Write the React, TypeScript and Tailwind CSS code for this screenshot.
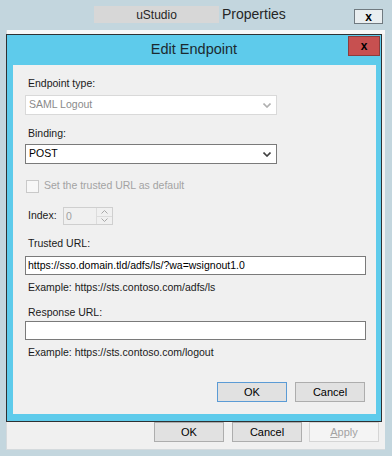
const Chevron = ({ color }: { color: string }) => (
  <svg width="8" height="5" viewBox="0 0 8 5" className="block">
    <polyline points="0.5,0.5 4,4 7.5,0.5" fill="none" stroke={color} strokeWidth="1.6" />
  </svg>
);

const SpinArrow = ({ up }: { up?: boolean }) => (
  <svg width="7" height="4" viewBox="0 0 7 4" className="block">
    <polyline
      points={up ? "0.5,3.5 3.5,0.5 6.5,3.5" : "0.5,0.5 3.5,3.5 6.5,0.5"}
      fill="none"
      stroke="#a8a8a8"
      strokeWidth="1"
    />
  </svg>
);

const Label = ({ children, className = "" }: { children: string; className?: string }) => (
  <div className={`pl-[3px] h-[14px] leading-[14px] text-[#1a1a1a] ${className}`}>{children}</div>
);

export default function App() {
  return (
    <div
      className="w-[392px] h-[456px] bg-[#c3d6de] flex flex-col overflow-hidden text-[10.5px]"
      style={{ fontFamily: '"Liberation Sans", Arial, sans-serif' }}
    >
      {/* outer window title */}
      <div className="h-[30px] flex items-start pl-[94px] pt-[6px]">
        <div className="w-[125px] h-[17px] bg-[#d7d7d7] flex items-center justify-center text-[12px] text-[#262626]">
          uStudio
        </div>
        <div className="ml-[3px] h-[17px] leading-[17px] text-[14px] text-[#262626]">Properties</div>
        <div className="ml-auto mr-[9px] mt-[3px] w-[29px] h-[15px] border border-[#707a80] bg-[#e9eef0] flex items-center justify-center text-[12px] font-bold leading-none text-black">
          x
        </div>
      </div>

      {/* outer window body */}
      <div className="ml-[6px] w-[379px] h-[420px] bg-[#f0f0f0] border-l border-b border-[#d4dadd] flex flex-col">
        <div className="h-[4px] bg-[#f7f7f7]" />

        {/* Edit Endpoint dialog */}
        <div className="-ml-[1px] w-[376px] h-[388px] border border-[#2e3133] bg-[#5ecbeb] flex flex-col">
          <div className="h-[30px] relative flex items-center justify-center">
            <span className="text-[14.5px] text-[#1c2a30]">Edit Endpoint</span>
            <div className="absolute right-[1px] top-[1px] w-[32px] h-[20px] bg-[#c75050] border border-[#8d3c3c] flex items-center justify-center text-[12px] font-bold leading-none text-black">
              x
            </div>
          </div>

          <div className="flex-1 ml-[6px] mr-[5px] mb-[7px] bg-[#f0f0f0] pl-[12px] pr-[10px] flex flex-col">
            <Label className="mt-[11px]">Endpoint type:</Label>
            <div className="mt-[5px] w-[252px] h-[20px] bg-white border border-[#d9d9d9] flex items-center pl-[3px] pr-[5px] text-[#8a8a8a]">
              <span className="flex-1">SAML Logout</span>
              <Chevron color="#b0b0b0" />
            </div>

            <Label className="mt-[11px]">Binding:</Label>
            <div className="mt-[4px] w-[252px] h-[20px] bg-white border border-[#7a7a7a] flex items-center pl-[3px] pr-[5px] text-black">
              <span className="flex-1">POST</span>
              <Chevron color="#404040" />
            </div>

            <div className="mt-[15px] h-[14px] flex items-center">
              <div className="ml-[1px] w-[13px] h-[13px] border border-[#c9c9c9] bg-[#f7f7f7]" />
              <span className="ml-[5px] text-[#a3a3a3]">Set the trusted URL as default</span>
            </div>

            <div className="mt-[14px] h-[18px] flex items-center">
              <span className="pl-[3px] w-[38px] text-[#1a1a1a]">Index:</span>
              <div className="w-[50px] h-[18px] border border-[#cfcfcf] bg-[#f0f0f0] flex">
                <span className="flex-1 pl-[2px] leading-[16px] text-[#a0a0a0]">0</span>
                <div className="w-[16px] border-l border-[#dcdcdc] flex flex-col">
                  <div className="flex-1 flex items-center justify-center border-b border-[#dcdcdc]">
                    <SpinArrow up />
                  </div>
                  <div className="flex-1 flex items-center justify-center">
                    <SpinArrow />
                  </div>
                </div>
              </div>
            </div>

            <Label className="mt-[11px]">Trusted URL:</Label>
            <div className="mt-[6px] h-[19px] bg-white border border-[#7a7a7a] flex items-center pl-[2px] text-black">
              https://sso.domain.tld/adfs/ls/?wa=wsignout1.0
            </div>
            <Label className="mt-[5px]">Example: https://sts.contoso.com/adfs/ls</Label>

            <Label className="mt-[11px]">Response URL:</Label>
            <div className="mt-[2px] h-[19px] bg-white border border-[#7a7a7a]" />
            <Label className="mt-[5px]">Example: https://sts.contoso.com/logout</Label>

            <div className="mt-[23px] flex justify-end gap-[8px] mr-[1px] text-[11px] text-black">
              <div className="w-[70px] h-[20px] bg-[#e1e1e1] border border-[#5b9bd5] flex items-center justify-center">
                OK
              </div>
              <div className="w-[70px] h-[20px] bg-[#e1e1e1] border border-[#adadad] flex items-center justify-center">
                Cancel
              </div>
            </div>
          </div>
        </div>

        {/* outer buttons */}
        <div className="flex justify-end pr-[6px] text-[11px]">
          <div className="w-[70px] h-[20px] bg-[#e1e1e1] border border-[#adadad] flex items-center justify-center text-black">
            OK
          </div>
          <div className="ml-[8px] w-[70px] h-[20px] bg-[#e1e1e1] border border-[#adadad] flex items-center justify-center text-black">
            Cancel
          </div>
          <div className="ml-[7px] w-[70px] h-[20px] bg-[#f4f4f4] border border-[#d5d5d5] flex items-center justify-center text-[#a3a3a3]">
            <span className="underline">A</span>pply
          </div>
        </div>
      </div>
    </div>
  );
}
